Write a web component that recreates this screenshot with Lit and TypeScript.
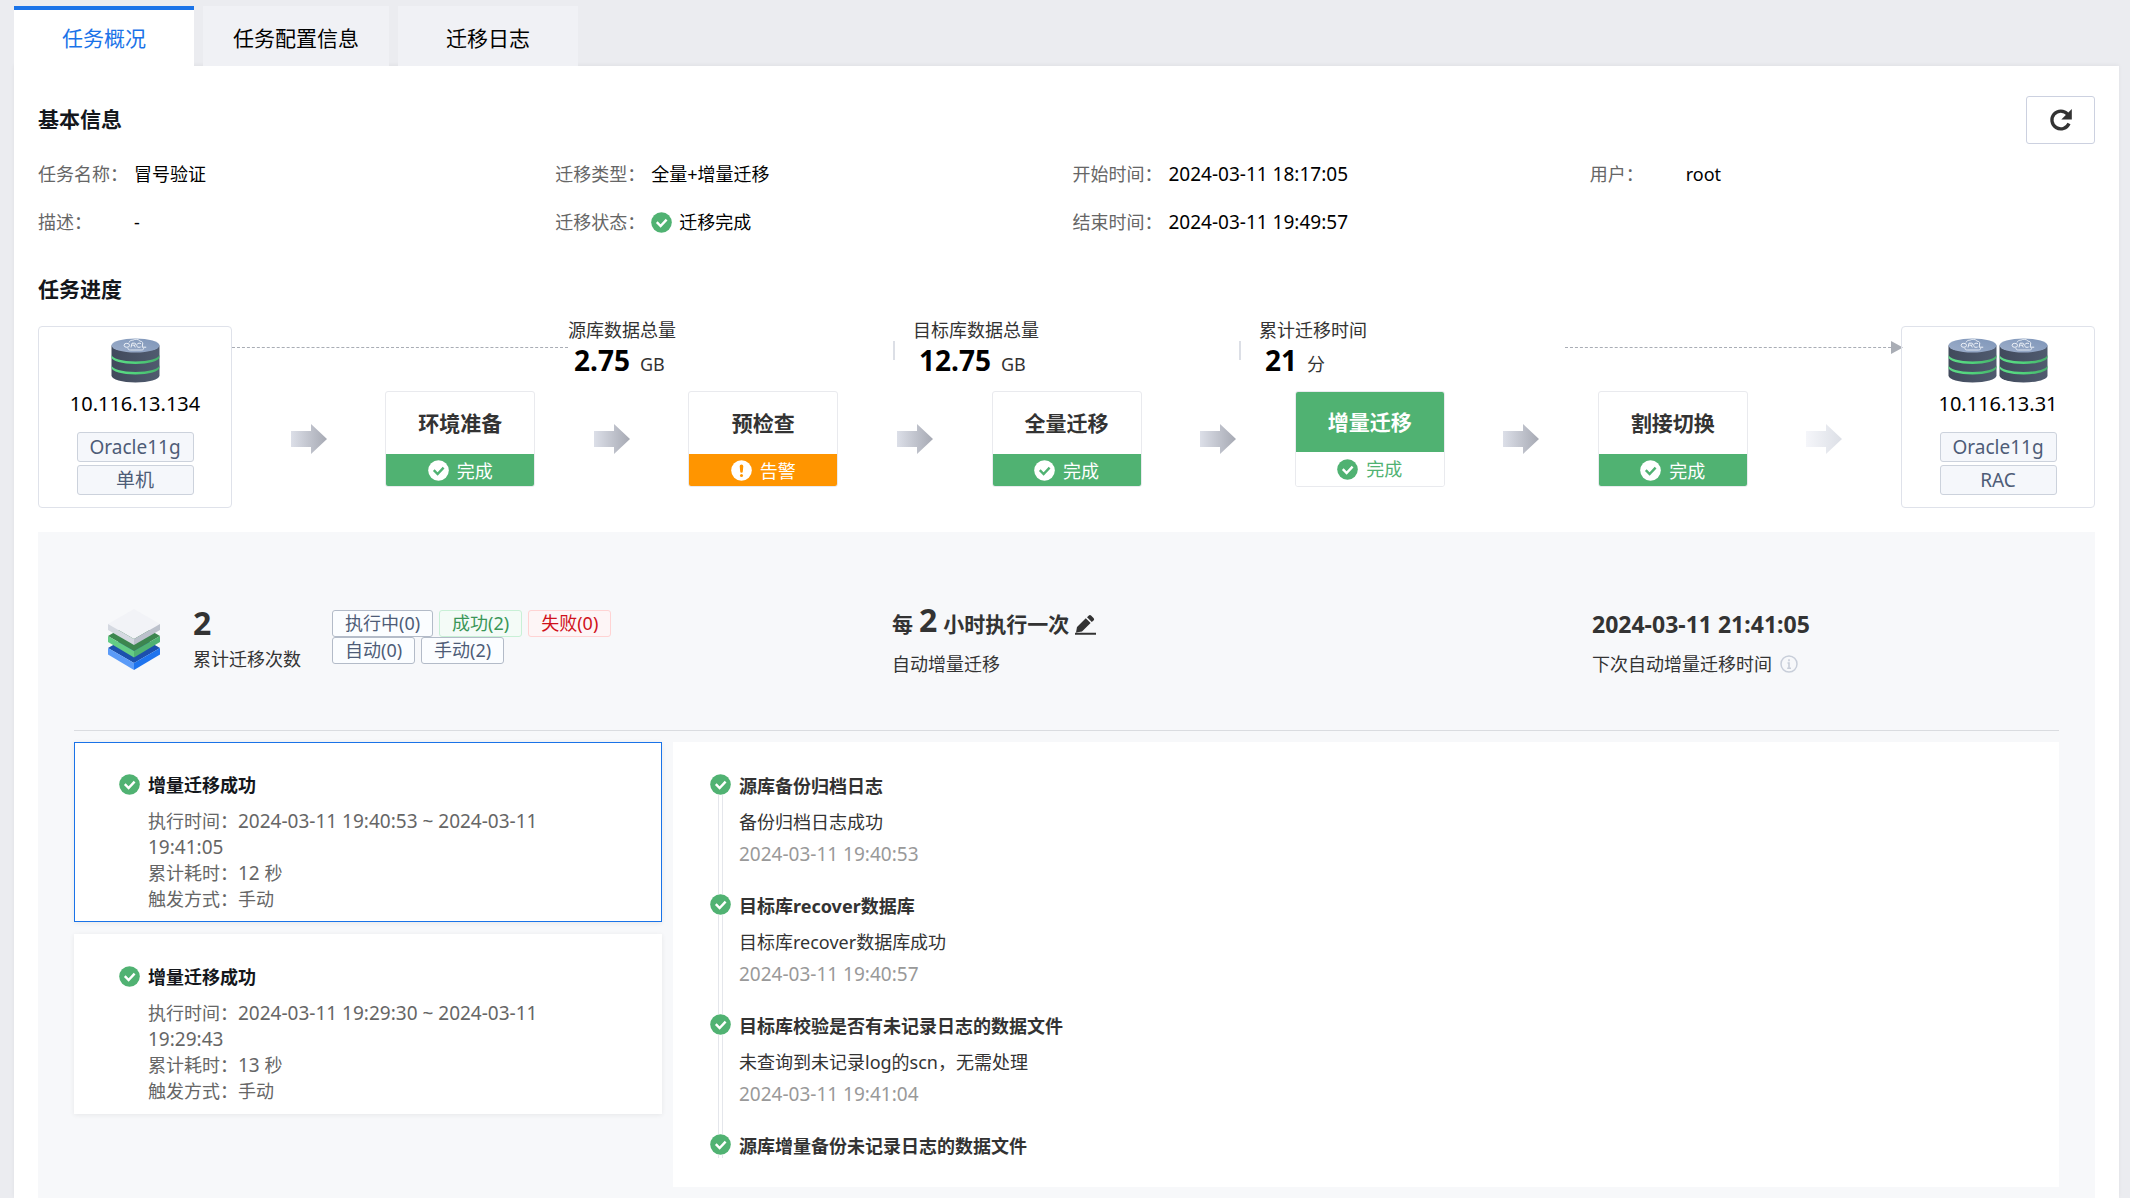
import { LitElement, html, svg, css, nothing } from "lit";
import { customElement, property, state } from "lit/decorators.js";
import { classMap } from "lit/directives/class-map.js";

type Kind = "ok" | "warn";

const statusIcon = (kind: Kind, disc: string, mark: string, size = 21) => html`
  <svg class="status-icon" width=${size} height=${size} viewBox="0 0 21 21" aria-hidden="true">
    <circle cx="10.5" cy="10.5" r="10.3" fill=${disc}></circle>
    ${kind === "ok"
      ? svg`<path d="M5.8 10.2 9.6 14 15.6 7.6" fill="none" stroke=${mark} stroke-width="2.4"/>`
      : svg`<path d="M8.7 6.2a1.8 1.8 0 0 1 3.6 0l-.5 5.3a1.3 1.3 0 0 1-2.6 0z" fill=${mark}/><circle cx="10.5" cy="15.4" r="1.5" fill=${mark}/>`}
  </svg>`;

const GREEN = "#50b272";

const database = () => html`
  <svg width="49" height="45" viewBox="0 0 49 45" aria-hidden="true">
    <defs>
      <linearGradient id="side" x1="0" x2="1"><stop offset="0" stop-color="#414a5c"></stop><stop offset="1" stop-color="#505b6f"></stop></linearGradient>
      <linearGradient id="lid" x1="0" x2="1" y1="1" y2="0"><stop offset="0" stop-color="#9cadc9"></stop><stop offset="1" stop-color="#7f96b9"></stop></linearGradient>
      <linearGradient id="ring" x1="0" x2="1"><stop offset="0" stop-color="#5fdc88"></stop><stop offset=".5" stop-color="#50d37b"></stop><stop offset="1" stop-color="#47b06a"></stop></linearGradient>
    </defs>
    <path d="M.5 7.500v30c0 4 10.700 7 24 7s24-3 24-7v-30z" fill="url(#side)"></path>
    <path d="M.5 16.500c0 4 10.700 7 24 7s24-3 24-7v2.500c0 4-10.700 7-24 7s-24-3-24-7zM.5 27c0 4 10.700 7 24 7s24-3 24-7v2.500c0 4-10.700 7-24 7s-24-3-24-7z" fill="url(#ring)"></path>
    <ellipse cx="24.500" cy="7.500" rx="24" ry="7" fill="url(#lid)"></ellipse>
    <path d="M18 4.500c.5-2 3-2.500 4-2.300 2-1.500 6-1 7 1 1.500 0 2.500.6 2.700 1.600M17 10c-.5 1.600 1 2 2.500 2h11c1.500 0 2.500-.8 2-2" fill="none" stroke="#e8edf5" stroke-width=".9"></path>
    <g fill="none" stroke="#eef2f8" stroke-width="1">
      <ellipse cx="15.800" cy="7.300" rx="2.700" ry="2"></ellipse>
      <path d="M20 9.500 21 5.200h2.600c1.700 0 1.400 2-.3 2h-2M23.300 7.200l1 2.200M30 5.500c-3-1-4.300.4-4.300 2s1.500 2.300 4 1.500M31.800 5l-.6 4.200h4"></path>
    </g>
  </svg>`;

const layers = html`
  <svg class="layers" width="52" height="61" viewBox="0 0 52 61" aria-hidden="true">
    <path d="M26 24 52 39 26 54 0 39z" fill="#1c50ad"></path>
    <path d="M0 39 26 54v7L0 45.500z" fill="#5b9bf8"></path>
    <path d="M52 39 26 54v7L52 45.500z" fill="#1f74ee"></path>
    <path d="M26 12 52 27 26 42 0 27z" fill="#3c864f"></path>
    <path d="M0 27 26 42v6.500L0 33z" fill="#64cc85"></path>
    <path d="M52 27 26 42v6.500L52 33z" fill="#50b272"></path>
    <path d="M26 0 52 15 26 30 0 15z" fill="#f2f3f7"></path>
    <path d="M0 15 26 30v6L0 21z" fill="#d5d9e1"></path>
    <path d="M52 15 26 30v6L52 21z" fill="#bcc1cc"></path>
  </svg>`;

@customElement("flow-arrow")
class FlowArrow extends LitElement {
  static styles = css`
    :host { display: flex; flex: 1; justify-content: center; }
  `;
  @property({ type: Boolean }) faint = false;
  render() {
    const [from, to] = this.faint ? ["#f5f6fa", "#dcdfe6"] : ["#dcdfe8", "#a6a9b3"];
    return html`<svg width="36" height="31" viewBox="0 0 36 31" aria-hidden="true">
      <defs><linearGradient id="g" x1="0" x2="1"><stop offset="0" stop-color=${from}></stop><stop offset="1" stop-color=${to}></stop></linearGradient></defs>
      <path d="M0 7h20V0l16 15L20 30v-7H0z" fill="url(#g)"></path>
    </svg>`;
  }
}

@customElement("flow-step")
class FlowStep extends LitElement {
  static styles = css`
    :host { display: block; width: 150px; flex: none; }
    .step {
      box-sizing: border-box; height: 96px; border: 1px solid #e9eaee; border-radius: 3px;
      overflow: hidden; display: flex; flex-direction: column; text-align: center;
    }
    .name { flex: 1; display: flex; align-items: center; justify-content: center; font-size: 21px; font-weight: 700; color: #333; }
    .state {
      height: 33px; margin: 0 -1px -1px; display: flex; align-items: center; justify-content: center; gap: 8px;
      font-size: 18px; color: #fff; background: #50b272;
    }
    .warn .state { background: #ff9500; }
    .current .name { background: #50b272; color: #fff; margin: -1px -1px 0; }
    .current .state { height: 34px; background: #fff; color: #50b272; margin: 0; }
  `;
  @property() name = "";
  @property() status = "";
  @property() kind: Kind = "ok";
  @property({ type: Boolean }) current = false;
  render() {
    const back = this.kind === "warn" ? "#ff9500" : GREEN;
    return html`<div class=${classMap({ step: true, warn: this.kind === "warn", current: this.current })}>
      <div class="name">${this.name}</div>
      <div class="state">${this.current ? statusIcon(this.kind, GREEN, "#fff") : statusIcon(this.kind, "#fff", back)}<span>${this.status}</span></div>
    </div>`;
  }
}

@customElement("db-node")
class DbNode extends LitElement {
  static styles = css`
    :host { display: block; flex: none; width: 194px; }
    .node {
      box-sizing: border-box; border: 1px solid #dfe2ea; border-radius: 4px; padding: 11px 0 12px;
      display: flex; flex-direction: column; align-items: center; gap: 3px;
    }
    .icons { display: flex; gap: 2px; height: 45px; }
    .ip { font-size: 20px; line-height: 36px; margin-bottom: 7px; color: #000; }
    .tag {
      box-sizing: border-box; width: 117px; line-height: 28px; text-align: center; font-size: 19px;
      color: #4e5c77; background: #f5f7fb; border: 1px solid #ccd2dc; border-radius: 3px;
    }
  `;
  @property() ip = "";
  @property() version = "";
  @property() mode = "";
  @property({ type: Number }) count = 1;
  render() {
    return html`<div class="node">
      <div class="icons">${Array.from({ length: this.count }, () => database())}</div>
      <div class="ip">${this.ip}</div>
      <div class="tag">${this.version}</div>
      <div class="tag">${this.mode}</div>
    </div>`;
  }
}

@customElement("app-root")
class AppRoot extends LitElement {
  static styles = css`
    :host {
      display: block; box-sizing: border-box; min-height: 100vh; padding: 6px 11px 0 14px; background: #ebecf0;
      font-family: "Noto Sans", "Noto Sans CJK SC", sans-serif; font-size: 18px; line-height: 24px; color: #333;
    }
    * { box-sizing: border-box; }
    button { font: inherit; color: inherit; margin: 0; cursor: pointer; }
    h2, p, dl, dd, ol, ul { margin: 0; padding: 0; list-style: none; }
    .tabs { display: flex; gap: 9px; }
    .tab {
      height: 60px; min-width: 180px; padding: 0 30px; border: 0; border-top: 4px solid #f0f1f5;
      background: #f0f1f5; font-size: 21px; color: #000;
    }
    .tab.on { background: #fff; border-top-color: #1a73e8; color: #1a73e8; }
    .page { background: #fff; padding: 30px 24px 0; box-shadow: 0 -1px 4px rgba(0, 0, 0, 0.05); }
    .head { display: flex; justify-content: space-between; align-items: center; }
    h2 { font-size: 21px; line-height: 28px; padding-bottom: 2px; font-weight: 700; color: #14171c; }
    .refresh {
      width: 69px; height: 48px; padding: 0; display: grid; place-items: center;
      background: #fff; border: 1px solid #ccd1e0; border-radius: 3px;
    }
    .facts { display: grid; grid-template-columns: repeat(4, 1fr); row-gap: 24px; margin: 18px -12px 0 0; }
    .fact { display: flex; align-items: center; }
    .fact dt { width: 96px; color: #666; }
    .fact dd { display: flex; align-items: center; gap: 7px; color: #000; }
    .num { font-size: 19px; }
    .progress { margin-top: 41px; }
    .flow { display: flex; align-items: flex-start; margin-top: 13px; }
    db-node { margin-top: 8px; }
    .track { flex: 1; min-width: 0; }
    .metrics { display: grid; grid-template-columns: 336fr 325fr 346fr 326fr 336fr; height: 60px; margin-bottom: 13px; }
    .lead { height: 30px; border-bottom: 1px dashed #a9adb5; display: flex; justify-content: flex-end; align-items: flex-end; }
    .tip { flex: none; margin: 0 -2px -7px 0; }
    .metric { display: flex; gap: 18px; align-items: center; }
    .metric + .metric::before { content: ""; width: 2px; height: 19px; background: #dcdfe6; }
    .amount { display: flex; align-items: baseline; gap: 10px; padding-left: 6px; line-height: 36px; }
    .amount b { font-size: 28px; color: #000; }
    .steps { display: flex; align-items: center; }
    .panel { margin-top: 24px; background: #f7f8fa; padding: 0 36px 11px; }
    .summary {
      display: grid; grid-template-columns: 818fr 700fr 467fr; height: 199px; padding-top: 73px;
      border-bottom: 1px solid #dadce0;
    }
    .runs { display: flex; align-items: flex-start; padding-left: 34px; }
    .layers { margin: 4px 33px 0 0; }
    .big { font-size: 32px; line-height: 36px; font-weight: 700; }
    .count { display: flex; flex-direction: column; gap: 6px; }
    .tags { width: 300px; display: flex; flex-wrap: wrap; column-gap: 6px; margin: 5px 0 0 31px; }
    .tag {
      padding: 0 12px; line-height: 25px; border: 1px solid #b3bbc8; border-radius: 3px; background: #fbfdff;
      color: #4e5c77; font-size: 18px;
    }
    .tag.good { border-color: #c8f0d6; background: #f4fbf7; color: #3a9657; }
    .tag.bad { border-color: #ffd3d3; background: #fdf5f6; color: #d0111b; }
    .every { display: flex; align-items: baseline; gap: 6px; height: 30px; line-height: 30px; margin-bottom: 17px; font-size: 21px; font-weight: 700; }
    .every .big { line-height: 30px; }
    .edit { padding: 0; border: 0; background: none; line-height: 0; align-self: flex-end; }
    .next { font-size: 23px; font-weight: 700; line-height: 38px; margin-bottom: 9px; }
    .hint { display: flex; align-items: center; gap: 8px; }
    .detail { display: grid; grid-template-columns: 588fr 1386fr; align-items: start; gap: 11px; margin-top: 11px; }
    .history { display: flex; flex-direction: column; gap: 12px; }
    .run {
      display: grid; grid-template-columns: 21px 1fr; column-gap: 8px; align-items: start; width: 100%; text-align: left;
      padding: 30px 72px 9px 44px; background: #fff; border: 1px solid #fff; box-shadow: 0 1px 5px rgba(0, 0, 0, 0.07);
    }
    .run.on { border-color: #1a73e8; }
    .status-icon { display: block; flex: none; }
    .run .status-icon { margin-top: 1px; }
    .title { display: block; font-weight: 700; color: #14171c; }
    .lines { display: block; margin-top: 11px; line-height: 26px; color: #666; }
    .line { display: block; }
    .timeline { background: #fff; padding: 32px 37px 29px; }
    .event { display: grid; grid-template-columns: 21px 1fr; column-gap: 8px; }
    .rail { display: flex; flex-direction: column; align-items: center; }
    .rail::after { content: ""; width: 3px; flex: 1; border: solid #e4e6eb; border-width: 0 1px; }
    .event .title { color: #333; }
    .sub { margin-top: 12px; }
    .when { margin: 8px 0 28px; font-size: 19px; color: #999; }
  `;

  @state() private tab = 0;
  @state() private selected = 0;

  private tabs = ["任务概况", "任务配置信息", "迁移日志"];
  private runs = [
    { from: "2024-03-11 19:40:53", toDate: "2024-03-11", toTime: "19:41:05", cost: "12", how: "手动" },
    { from: "2024-03-11 19:29:30", toDate: "2024-03-11", toTime: "19:29:43", cost: "13", how: "手动" },
  ];
  private events = [
    { title: "源库备份归档日志", sub: "备份归档日志成功", when: "2024-03-11 19:40:53" },
    { title: "目标库recover数据库", sub: "目标库recover数据库成功", when: "2024-03-11 19:40:57" },
    { title: "目标库校验是否有未记录日志的数据文件", sub: "未查询到未记录log的scn，无需处理", when: "2024-03-11 19:41:04" },
    { title: "源库增量备份未记录日志的数据文件", sub: "", when: "" },
  ];

  private fact(label: string, value: unknown) {
    return html`<div class="fact"><dt>${label}：</dt><dd>${value}</dd></div>`;
  }

  private metric(label: string, value: string, unit: string) {
    return html`<div class="metric">
      <div><div>${label}</div><div class="amount"><b>${value}</b><span>${unit}</span></div></div>
    </div>`;
  }

  render() {
    const num = (t: string) => html`<span class="num">${t}</span>`;
    return html`
      <div class="tabs" role="tablist" lang="zh-CN">
        ${this.tabs.map((t, i) => html`<button role="tab" aria-selected=${i === this.tab} class=${classMap({ tab: true, on: i === this.tab })} @click=${() => (this.tab = i)}>${t}</button>`)}
      </div>
      <main class="page" lang="zh-CN">
        <div class="head">
          <h2>基本信息</h2>
          <button class="refresh" aria-label="刷新">
            <svg width="24" height="24" viewBox="0 0 24 24" aria-hidden="true">
              <path d="M20 15.500A8.900 8.900 0 1 1 18.600 6.200" fill="none" stroke="#333" stroke-width="3.300"></path>
              <path d="M22.800 1v10.500H12.300z" fill="#333"></path>
            </svg>
          </button>
        </div>
        <dl class="facts">
          ${this.fact("任务名称", "冒号验证")}
          ${this.fact("迁移类型", "全量+增量迁移")}
          ${this.fact("开始时间", num("2024-03-11 18:17:05"))}
          ${this.fact("用户", "root")}
          ${this.fact("描述", "-")}
          ${this.fact("迁移状态", html`${statusIcon("ok", GREEN, "#fff")}<span>迁移完成</span>`)}
          ${this.fact("结束时间", num("2024-03-11 19:49:57"))}
        </dl>
        <h2 class="progress">任务进度</h2>
        <div class="flow">
          <db-node ip="10.116.13.134" version="Oracle11g" mode="单机"></db-node>
          <div class="track">
            <div class="metrics">
              <div class="lead"></div>
              ${this.metric("源库数据总量", "2.75", "GB")}
              ${this.metric("目标库数据总量", "12.75", "GB")}
              ${this.metric("累计迁移时间", "21", "分")}
              <div class="lead"><svg class="tip" width="12" height="13" viewBox="0 0 12 13" aria-hidden="true"><path d="M0 0 12 6.500 0 13z" fill="#a9adb5"></path></svg></div>
            </div>
            <div class="steps">
              <flow-arrow></flow-arrow>
              <flow-step name="环境准备" status="完成"></flow-step>
              <flow-arrow></flow-arrow>
              <flow-step name="预检查" status="告警" kind="warn"></flow-step>
              <flow-arrow></flow-arrow>
              <flow-step name="全量迁移" status="完成"></flow-step>
              <flow-arrow></flow-arrow>
              <flow-step name="增量迁移" status="完成" current></flow-step>
              <flow-arrow></flow-arrow>
              <flow-step name="割接切换" status="完成"></flow-step>
              <flow-arrow faint></flow-arrow>
            </div>
          </div>
          <db-node ip="10.116.13.31" version="Oracle11g" mode="RAC" count="2"></db-node>
        </div>
        <section class="panel">
          <div class="summary">
            <div class="runs">
              ${layers}
              <div class="count"><span class="big">2</span><span>累计迁移次数</span></div>
              <div class="tags">
                <span class="tag">执行中(0)</span><span class="tag good">成功(2)</span><span class="tag bad">失败(0)</span>
                <span class="tag">自动(0)</span><span class="tag">手动(2)</span>
              </div>
            </div>
            <div>
              <div class="every">
                <span>每</span><span class="big">2</span><span>小时执行一次</span>
                <button class="edit" aria-label="编辑">
                  <svg width="21" height="20" viewBox="0 0 21 20" aria-hidden="true">
                    <path d="M1 17.500 2 12 10.800 3.200 15.600 8 7 16.600zM12 2.200 13.600.7a2 2 0 0 1 2.700 0l2.200 2.200a2 2 0 0 1 0 2.700L16.800 7zM0 17.800h21v2H0z" fill="#333"></path>
                  </svg>
                </button>
              </div>
              <p>自动增量迁移</p>
            </div>
            <div>
              <p class="next">2024-03-11 21:41:05</p>
              <p class="hint">下次自动增量迁移时间
                <svg width="18" height="18" viewBox="0 0 18 18" aria-hidden="true">
                  <circle cx="9" cy="9" r="8" fill="none" stroke="#c8ced9" stroke-width="1.500"></circle>
                  <path d="M9 4.200v2M7.500 8H9v5M7.200 13.200h3.800" fill="none" stroke="#c8ced9" stroke-width="1.600"></path>
                </svg>
              </p>
            </div>
          </div>
          <div class="detail">
            <div class="history">
              ${this.runs.map((r, i) => html`<button class=${classMap({ run: true, on: i === this.selected })} @click=${() => (this.selected = i)}>
                ${statusIcon("ok", GREEN, "#fff")}
                <span>
                  <span class="title">增量迁移成功</span>
                  <span class="lines">
                    <span class="line">执行时间：${num(`${r.from} ~ ${r.toDate}`)} ${num(r.toTime)}</span>
                    <span class="line">累计耗时：${num(r.cost)} 秒</span>
                    <span class="line">触发方式：${r.how}</span>
                  </span>
                </span>
              </button>`)}
            </div>
            <ol class="timeline">
              ${this.events.map((e) => html`<li class="event">
                <div class="rail">${statusIcon("ok", GREEN, "#fff")}</div>
                <div>
                  <span class="title">${e.title}</span>
                  ${e.sub ? html`<p class="sub">${e.sub}</p><p class="when">${e.when}</p>` : nothing}
                </div>
              </li>`)}
            </ol>
          </div>
        </section>
      </main>`;
  }
}
